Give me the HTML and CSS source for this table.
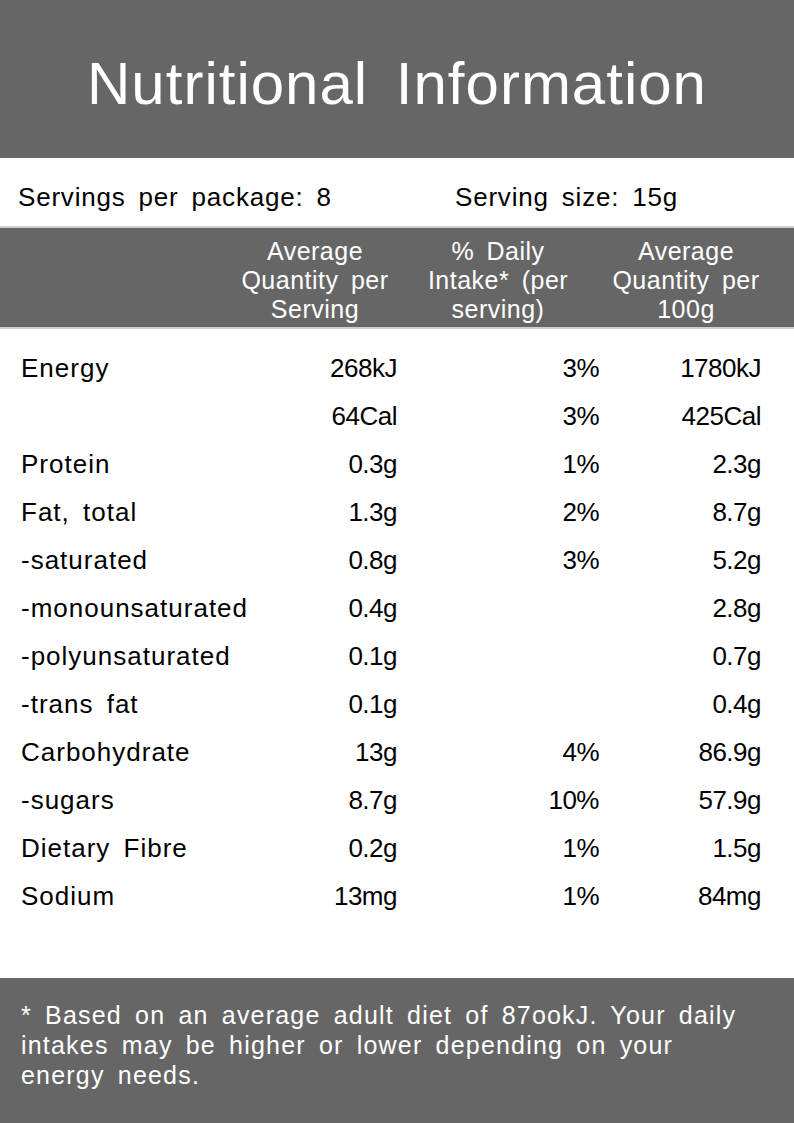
FILE: index.html
```html
<!DOCTYPE html>
<html>
<head>
<meta charset="utf-8">
<link rel="stylesheet" href="styles.css">
</head>
<body>
<div class="panel">
  <header class="title-bar"><h1>Nutritional Information</h1></header>
  <div class="servings">
    <span class="serv-pkg">Servings per package: 8</span>
    <span class="serv-size">Serving size: 15g</span>
  </div>
  <div class="col-head">
    <div></div>
    <div class="h">Average<br>Quantity per<br>Serving</div>
    <div class="h">% Daily<br>Intake* (per<br>serving)</div>
    <div class="h h3">Average<br>Quantity per<br>100g</div>
  </div>
  <div class="rows">
    <div class="row"><span>Energy</span><span>268kJ</span><span>3%</span><span>1780kJ</span></div>
    <div class="row"><span></span><span>64Cal</span><span>3%</span><span>425Cal</span></div>
    <div class="row"><span>Protein</span><span>0.3g</span><span>1%</span><span>2.3g</span></div>
    <div class="row"><span>Fat, total</span><span>1.3g</span><span>2%</span><span>8.7g</span></div>
    <div class="row"><span>-saturated</span><span>0.8g</span><span>3%</span><span>5.2g</span></div>
    <div class="row"><span>-monounsaturated</span><span>0.4g</span><span></span><span>2.8g</span></div>
    <div class="row"><span>-polyunsaturated</span><span>0.1g</span><span></span><span>0.7g</span></div>
    <div class="row"><span>-trans fat</span><span>0.1g</span><span></span><span>0.4g</span></div>
    <div class="row"><span>Carbohydrate</span><span>13g</span><span>4%</span><span>86.9g</span></div>
    <div class="row"><span>-sugars</span><span>8.7g</span><span>10%</span><span>57.9g</span></div>
    <div class="row"><span>Dietary Fibre</span><span>0.2g</span><span>1%</span><span>1.5g</span></div>
    <div class="row"><span>Sodium</span><span>13mg</span><span>1%</span><span>84mg</span></div>
  </div>
  <footer class="note">* Based on an average adult diet of 87ookJ. Your daily<br>intakes may be higher or lower depending on your<br>energy needs.</footer>
</div>
</body>
</html>
```
FILE: styles.css
```css
html, body {
  margin: 0;
  padding: 0;
  background: #ffffff;
}
body {
  font-family: "Liberation Sans", Arial, sans-serif;
  color: #000;
  word-spacing: 5px;
}
.panel {
  width: 794px;
  height: 1123px;
  display: flex;
  flex-direction: column;
}
.title-bar {
  background: #666666;
  height: 158px;
  display: flex;
  align-items: center;
  justify-content: center;
}
.title-bar h1 {
  margin: 0;
  color: #ffffff;
  font-weight: normal;
  font-size: 60px;
  letter-spacing: 1px;
  word-spacing: 10px;
  padding-top: 8px;
}
.servings {
  height: 70px;
  box-sizing: border-box;
  padding: 11px 0 0 18px;
  display: flex;
  align-items: center;
  font-size: 26px;
  letter-spacing: 0.8px;
  border-bottom: 2px solid #cfcfcf;
}
.serv-pkg { width: 437px; }
.col-head {
  background: #666666;
  color: #ffffff;
  height: 101px;
  box-sizing: border-box;
  padding: 9px 33px 0 21px;
  display: grid;
  grid-template-columns: 212px 164px 202px 162px;
  font-size: 25px;
  line-height: 29px;
  letter-spacing: 0.5px;
  border-bottom: 2px solid #cfcfcf;
}
.col-head .h {
  text-align: center;
  white-space: nowrap;
}
.col-head .h3 {
  padding-left: 12px;
}
.rows {
  padding: 15px 33px 0 21px;
  flex: 1;
}
.row {
  display: grid;
  grid-template-columns: 212px 164px 202px 162px;
  height: 48px;
  align-items: center;
  font-size: 26px;
  white-space: nowrap;
}
.row span:first-child {
  letter-spacing: 1px;
}
.row span:not(:first-child) {
  text-align: right;
  letter-spacing: -0.5px;
}
.note {
  background: #666666;
  color: #ffffff;
  height: 145px;
  box-sizing: border-box;
  padding: 22px 20px 0 21px;
  font-size: 25px;
  line-height: 30px;
  letter-spacing: 1.2px;
  white-space: nowrap;
}
```
